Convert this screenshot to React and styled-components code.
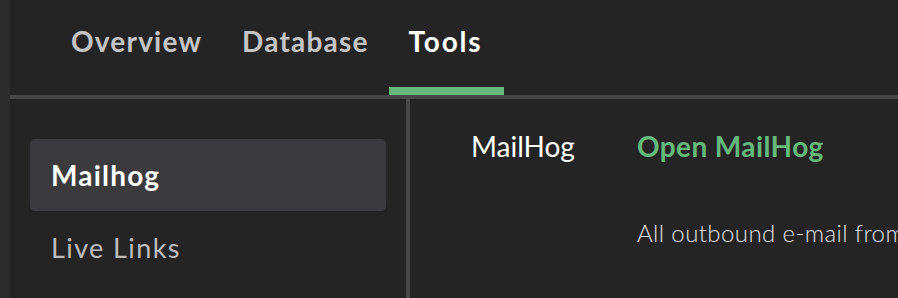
import React from "react";
import styled, { createGlobalStyle } from "styled-components";

const GlobalStyle = createGlobalStyle`
  html, body {
    margin: 0;
    padding: 0;
    background: #242424;
    font-family: Lato, "Open Sans", sans-serif;
    overflow: hidden;
  }
`;

const tabs = ["Overview", "Database", "Tools"];
const toolsMenu = ["Mailhog", "Live Links"];

const App = () => {
  const activeTab = "Tools";
  const activeTool = "Mailhog";

  return (
    <>
      <GlobalStyle />
      <Shell>
        <Rail />
        <Main>
          <TabBar>
            {tabs.map((tab) => (
              <Tab key={tab} $active={tab === activeTab}>
                {tab}
              </Tab>
            ))}
          </TabBar>
          <Body>
            <Sidebar>
              {toolsMenu.map((item) => (
                <MenuItem key={item} $active={item === activeTool}>
                  {item}
                </MenuItem>
              ))}
            </Sidebar>
            <Content>
              <Label>MailHog</Label>
              <OpenLink href="#">Open MailHog</OpenLink>
              <Description>
                All outbound e-mail from this site will be caught by MailHog.
              </Description>
            </Content>
          </Body>
        </Main>
      </Shell>
    </>
  );
};

export default App;

const Shell = styled.div`
  display: flex;
  width: 898px;
  height: 298px;
  overflow: hidden;
  background: #242424;
`;

const Rail = styled.div`
  width: 10px;
  flex-shrink: 0;
  background: #2b2b2b;
`;

const Main = styled.div`
  flex: 1;
  display: flex;
  flex-direction: column;
  min-width: 0;
`;

const TabBar = styled.nav`
  display: flex;
  height: 99px;
  flex-shrink: 0;
  box-sizing: border-box;
  padding-left: 41px;
  border-bottom: 4px solid #464646;
`;

const Tab = styled.div`
  box-sizing: border-box;
  height: 95px;
  padding: 24px ${(p) => (p.$active ? "22px" : "20px")} 0 20px;
  font-size: 28px;
  line-height: 34px;
  font-weight: 700;
  letter-spacing: ${(p) => (p.$active ? "1.8px" : "1.2px")};
  color: ${(p) => (p.$active ? "#ffffff" : "#c4c4c4")};
  border-bottom: 8px solid ${(p) => (p.$active ? "#66b97d" : "transparent")};
`;

const Body = styled.div`
  flex: 1;
  display: flex;
  min-height: 0;
`;

const Sidebar = styled.aside`
  width: 400px;
  flex-shrink: 0;
  box-sizing: border-box;
  padding: 40px 20px 0;
  border-right: 4px solid #464646;
`;

const MenuItem = styled.div`
  display: flex;
  align-items: center;
  height: 72px;
  padding-left: 21px;
  border-radius: 5px;
  font-size: ${(p) => (p.$active ? "28px" : "27px")};
  font-weight: ${(p) => (p.$active ? 700 : 400)};
  letter-spacing: ${(p) => (p.$active ? "1.2px" : "1.4px")};
  color: ${(p) => (p.$active ? "#ffffff" : "#bdbdbd")};
  background: ${(p) => (p.$active ? "#3b3b3d" : "transparent")};
`;

const Content = styled.section`
  flex: 1;
  display: grid;
  grid-template-columns: 166px auto;
  grid-auto-rows: min-content;
  row-gap: 56px;
  padding: 30px 0 0 61px;
  white-space: nowrap;
  overflow: hidden;
`;

const Label = styled.div`
  font-size: 28px;
  line-height: 34px;
  font-weight: 400;
  color: #ffffff;
`;

const OpenLink = styled.a`
  font-size: 28px;
  line-height: 34px;
  font-weight: 700;
  letter-spacing: 0.4px;
  color: #66b97d;
  text-decoration: none;
`;

const Description = styled.p`
  grid-column: 2;
  margin: 0;
  font-size: 24px;
  line-height: 28px;
  font-weight: 300;
  letter-spacing: 0.4px;
  color: #e2e2e2;
`;
